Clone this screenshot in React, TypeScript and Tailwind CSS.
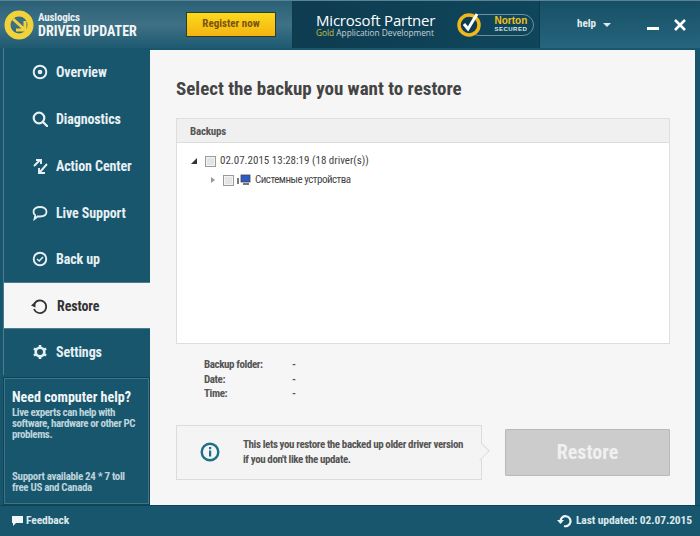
import React from "react";

const narrow = "font-['Liberation_Sans_Narrow','Roboto_Condensed','Liberation_Sans',sans-serif]";

const icons: Record<string, React.ReactNode> = {
  Overview: (<><circle cx="8" cy="8" r="6.3" fill="none" stroke="currentColor" strokeWidth="2" /><circle cx="8" cy="8" r="2.3" fill="currentColor" /></>),
  Diagnostics: (<><circle cx="7" cy="7" r="5.3" fill="none" stroke="currentColor" strokeWidth="2.2" /><path d="M11 11l4 4" stroke="currentColor" strokeWidth="2.4" strokeLinecap="round" /></>),
  "Action Center": (<><path d="M1 8l6-6M3 2h5v4" fill="none" stroke="currentColor" strokeWidth="1.9" transform="translate(1 0)" /><path d="M15 6L8 14M13 15H7v-5" fill="none" stroke="currentColor" strokeWidth="1.9" /></>),
  "Live Support": (<path d="M8 2c3.8 0 6.5 1.900 6.500 4.800S11.800 11.500 8 11.500c-.8 0-1.500-.1-2.100-.2L2.500 14l.7-3.700C2 9.400 1.500 8.200 1.500 6.800 1.500 3.900 4.200 2 8 2z" fill="none" stroke="currentColor" strokeWidth="1.800" />),
  "Back up": (<><circle cx="8" cy="8" r="6.300" fill="none" stroke="currentColor" strokeWidth="1.900" /><path d="M5 8l2.200 2L11 6" fill="none" stroke="currentColor" strokeWidth="1.600" /></>),
  Restore: (<><path d="M3.500 5.500A6.300 6.300 0 1 1 3 11" fill="none" stroke="currentColor" strokeWidth="1.800" /><path d="M0 7.500l4.500-4v6z" fill="currentColor" /></>),
  Settings: (<><circle cx="8" cy="8" r="4.300" fill="none" stroke="currentColor" strokeWidth="2.600" /><path d="M8 1v2.500M8 12.500V15M1.900 4.500l2.200 1.300M11.900 10.200l2.200 1.300M1.900 11.500l2.200-1.300M11.900 5.800l2.200-1.300" stroke="currentColor" strokeWidth="2.600" /></>),
};

function NavItem({ label, active, h }: { label: string; active?: boolean; h: string }) {
  return (
    <div
      className={
        active
          ? `${h} flex items-center bg-[#f6f6f6] text-[#333] pl-[27px] gap-[10px] shrink-0`
          : `${h} flex items-center text-[#e6f0f3] pl-[28px] gap-[8px] shrink-0`
      }
    >
      <svg width="16" height="16" viewBox="0 0 16 16" className="shrink-0">{icons[label]}</svg>
      <span className={`${narrow} text-[14px] tracking-[-0.1px] font-bold leading-none`}>{label}</span>
    </div>
  );
}

function Checkbox() {
  return <span className="block w-[11px] h-[11px] border border-[#9a9a9a] bg-[#e4e4e4] shadow-[inset_0_0_0_1px_#f4f4f4] shrink-0" />;
}

export default function App() {
  return (
    <div className="w-[700px] h-[536px] overflow-hidden bg-[#17566d] flex flex-col font-['Liberation_Sans',sans-serif]">
      {/* header */}
      <header className="h-[48px] flex shrink-0 border-t border-[#5a8494]">
        <div className="w-[293px] flex items-center bg-gradient-to-b from-[#2a6076] via-[#3f7186] to-[#1d5a71] border-r border-[#0f3a4d]">
          <svg width="36" height="36" viewBox="0 0 36 36" className="ml-[1px] shrink-0">
            <circle cx="18" cy="18" r="11.500" fill="none" stroke="#f1d23a" strokeWidth="6" />
            <path d="M12 12l11 10M24 14v9H15" fill="none" stroke="#f1d23a" strokeWidth="3" />
          </svg>
          <div className="ml-[1px] w-[148px] shrink-0 text-white flex flex-col whitespace-nowrap">
            <span className={`${narrow} text-[11px] leading-[13px] font-bold tracking-[-0.2px] text-[#e8f0f3]`}>Auslogics</span>
            <span className={`${narrow} text-[14px] leading-[15px] font-bold text-[#f2f6f7]`}>DRIVER UPDATER</span>
          </div>
          <div className={`w-[90px] h-[25px] flex items-center justify-center border border-[#2d3a30] bg-gradient-to-b from-[#fbd91c] to-[#f4b411] text-[#7a5410] font-bold text-[11px] ${narrow}`}>
            Register now
          </div>
        </div>
        <div className="w-[247px] flex items-center bg-gradient-to-r from-[#0e3c50] to-[#0f465c] border-r border-[#0f3a4d]">
          <div className="ml-[23px] flex flex-col font-['Open_Sans',sans-serif] whitespace-nowrap">
            <span className="text-[15px] leading-[16px] text-white tracking-[-0.2px]">Microsoft Partner</span>
            <span className="text-[8.300px] leading-[10px] text-[#c6d3d8]"><span className="text-[#c9c44e]">Gold</span> Application Development</span>
          </div>
          <div className="ml-[21px] relative flex items-center">
            <div className="w-[66px] h-[22px] ml-[12px] rounded-full border border-[#6f8f9c] flex flex-col items-end justify-center pr-[6px]">
              <span className="text-[#f0c11d] text-[10px] leading-[10px] font-bold">Norton</span>
              <span className="text-[#dfe7ea] text-[6px] leading-[7px] font-bold tracking-[0.5px]">SECURED</span>
            </div>
            <svg width="26" height="26" viewBox="0 0 26 26" className="absolute left-0 top-[-2px]">
              <circle cx="13" cy="13" r="10" fill="#0e3c50" stroke="#f0b81c" strokeWidth="3.500" />
              <path d="M8 12l4 5 9-15" fill="none" stroke="#fff" strokeWidth="3" />
            </svg>
          </div>
        </div>
        <div className="flex-1 flex items-center bg-gradient-to-b from-[#175066] to-[#25657d] text-white">
          <span className={`${narrow} ml-[37px] text-[11px] font-bold text-[#e4edf0]`}>help</span>
          <span className="ml-[7px] w-0 h-0 border-x-[4px] border-x-transparent border-t-[4px] border-t-[#dfe8eb]" />
          <span className="ml-[36px] mt-[8px] w-[12px] h-[3px] bg-white" />
          <svg width="12" height="12" viewBox="0 0 12 12" className="ml-[15px]"><path d="M1 1l10 10M11 1L1 11" stroke="#fff" strokeWidth="2.600" /></svg>
        </div>
      </header>

      <div className="flex-1 flex min-h-0 pl-[3px] pr-[5px]">
        {/* sidebar */}
        <aside className="w-[147px] shrink-0 flex flex-col text-white">
          <div className="flex flex-col border-l border-[#4c7c8e]">
            <NavItem label="Overview" h="h-[47px]" />
            <NavItem label="Diagnostics" h="h-[47px]" />
            <NavItem label="Action Center" h="h-[47px]" />
            <NavItem label="Live Support" h="h-[47px]" />
            <NavItem label="Back up" h="h-[46px]" />
            <div className="h-px bg-[#4c7c8e]" />
            <div className="h-px bg-[#4c7c8e] -mt-px" />
            <NavItem label="Restore" active h="h-[45px]" />
            <div className="h-px bg-[#4c7c8e]" />
            <NavItem label="Settings" h="h-[46px]" />
          </div>
          <div className="h-[128px] mt-[2px] border border-[#0f4458] shadow-[inset_0_0_0_1px_#3f7386] pl-[8px] pt-[11px] flex flex-col">
            <span className={`${narrow} text-[14px] leading-[17px] font-bold text-[#f0f5f6]`}>Need computer help?</span>
            <p className={`${narrow} mt-[1px] text-[11px] leading-[11px] font-bold tracking-[-0.45px] text-[#bcd3db]`}>Live experts can help with<br />software, hardware or other PC<br />problems.</p>
            <p className={`${narrow} mt-[31px] text-[11px] leading-[11px] font-bold tracking-[-0.35px] text-[#bcd3db]`}>Support available 24 * 7 toll<br />free US and Canada</p>
          </div>
        </aside>

        {/* main */}
        <main className="mt-[2px] w-[545px] h-[455px] bg-[#f6f6f6] pl-[26px] pr-[25px] pt-[27px] flex flex-col">
          <h1 className={`${narrow} text-[19px] leading-[24px] font-bold text-[#444]`}>Select the backup you want to restore</h1>
          <section className="mt-[17px] h-[226px] border border-[#dedede] bg-white flex flex-col">
            <div className={`${narrow} h-[24px] bg-[#f0f0f0] border-b border-[#dcdcdc] pl-[13px] pt-[3px] flex items-center text-[11px] tracking-[-0.2px] font-bold text-[#555]`}>Backups</div>
            <div className="flex items-center pl-[14px] mt-[12px] h-[12px] text-[#444]">
              <span className="w-0 h-0 border-l-[6px] border-l-transparent border-b-[6px] border-b-[#333]" />
              <span className="ml-[8px]"><Checkbox /></span>
              <span className={`${narrow} ml-[4px] text-[11px]`}>02.07.2015 13:28:19 (18 driver(s))</span>
            </div>
            <div className="flex items-center pl-[34px] mt-[7px] h-[12px] text-[#444]">
              <span className="w-0 h-0 border-y-[3.500px] border-y-transparent border-l-[4px] border-l-[#999]" />
              <span className="ml-[8px]"><Checkbox /></span>
              <svg width="14" height="12" viewBox="0 0 14 12" className="ml-[3px]">
                <rect x="0" y="4" width="2" height="6" fill="#777" />
                <rect x="4" y="1" width="9" height="7" fill="#2b5bc4" stroke="#445" strokeWidth="0.800" />
                <rect x="6" y="9" width="6" height="2" fill="#777" />
              </svg>
              <span className={`${narrow} ml-[4px] text-[11px] tracking-[-0.5px]`}>Системные устройства</span>
            </div>
          </section>
          <dl className={`${narrow} mt-[14px] ml-[28px] grid grid-cols-[88px_1fr] text-[11px] leading-[14.500px] tracking-[-0.4px] text-[#555] font-bold`}>
            <dt>Backup folder:</dt><dd>-</dd>
            <dt>Date:</dt><dd>-</dd>
            <dt>Time:</dt><dd>-</dd>
          </dl>
          <div className="mt-[23px] flex items-center">
            <div className="relative w-[306px] h-[55px] border border-[#dcdcdc] bg-[#f4f4f4] flex items-center">
              <svg width="20" height="20" viewBox="0 0 20 20" className="ml-[23px] shrink-0">
                <circle cx="10" cy="10" r="8.300" fill="none" stroke="#1d7186" strokeWidth="2.400" />
                <rect x="9" y="8.500" width="2.200" height="6" fill="#1d7186" />
                <rect x="9" y="5" width="2.200" height="2.200" fill="#1d7186" />
              </svg>
              <p className={`${narrow} ml-[23px] text-[11px] leading-[15px] font-bold tracking-[-0.4px] text-[#555] whitespace-nowrap`}>This lets you restore the backed up older driver version<br />if you don't like the update.</p>
              <span className="absolute right-[-7px] top-[19px] w-[14px] h-[14px] rotate-45 bg-[#f4f4f4] border-t border-r border-[#dcdcdc] scale-x-75" />
            </div>
            <div className={`${narrow} ml-[23px] w-[165px] h-[47px] bg-[#cccccc] border border-[#b9b9b9] rounded-[1px] flex items-center justify-center text-[#f0f0f0] font-bold text-[20px]`}>Restore</div>
          </div>
        </main>
      </div>

      {/* footer */}
      <footer className="h-[31px] shrink-0 border-t border-[#0f4458] flex items-center text-[#dce8ec] bg-[#17566d]">
        <svg width="12" height="12" viewBox="0 0 12 12" className="ml-[12px]"><path d="M0 1h11v7H4l-3 3V8H0z" fill="#f0f5f6" /></svg>
        <span className={`${narrow} ml-[2px] text-[11.500px] tracking-[-0.1px] font-bold`}>Feedback</span>
        <svg width="15" height="14" viewBox="0 0 15 14" className="ml-auto mr-[4px]">
          <path d="M3.500 7A5 5 0 1 1 7 12" fill="none" stroke="#f0f5f6" strokeWidth="2.200" />
          <path d="M0 6h7l-3.500 4z" fill="#f0f5f6" />
        </svg>
        <span className={`${narrow} mr-[8px] text-[11.500px] tracking-[-0.1px] font-bold`}>Last updated: 02.07.2015</span>
      </footer>
    </div>
  );
}
